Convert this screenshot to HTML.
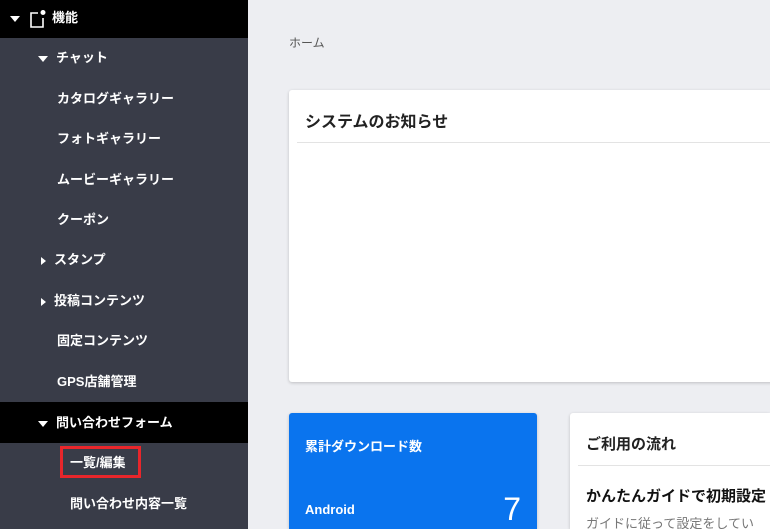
<!DOCTYPE html><html><head><meta charset="utf-8"><style>
*{margin:0;padding:0;box-sizing:border-box}
html,body{width:770px;height:529px;overflow:hidden}
body{background:#edeef2;font-family:"Liberation Sans","Noto Sans CJK JP",sans-serif;position:relative}
.sb{position:absolute;left:0;top:0;width:248px;height:529px;background:#393c48;color:#fff}
.it{position:absolute;left:0;width:248px;height:41px;line-height:41px;font-size:13px;font-weight:bold}
.blk{background:#000}
.tri{display:inline-block;width:0;height:0;border-left:5px solid transparent;border-right:5px solid transparent;border-top:6px solid #fff;margin-right:8px;vertical-align:middle}
.trr{display:inline-block;width:0;height:0;border-top:4px solid transparent;border-bottom:4px solid transparent;border-left:5px solid #fff;margin-right:8px;vertical-align:middle}
.card{position:absolute;background:#fff;border-radius:3px;box-shadow:0 1px 3px rgba(0,0,0,.2);overflow:hidden}
</style></head><body>
<div class="sb">
<div class="it blk" style="top:-3px;padding-left:10px"><span class="tri"></span><svg width="18" height="20" style="vertical-align:middle;margin-right:6px" viewBox="0 0 18 20"><path d="M10 4H3v14h12V9" fill="none" stroke="#fff" stroke-width="1.6"/><circle cx="15" cy="3.5" r="2.5" fill="#fff"/></svg>機能</div>
<div class="it" style="top:37px;padding-left:38px"><span class="tri"></span>チャット</div>
<div class="it" style="top:78px;padding-left:57px">カタログギャラリー</div>
<div class="it" style="top:118px;padding-left:57px">フォトギャラリー</div>
<div class="it" style="top:159px;padding-left:57px">ムービーギャラリー</div>
<div class="it" style="top:199px;padding-left:57px">クーポン</div>
<div class="it" style="top:239px;padding-left:41px"><span class="trr"></span>スタンプ</div>
<div class="it" style="top:280px;padding-left:41px"><span class="trr"></span>投稿コンテンツ</div>
<div class="it" style="top:320px;padding-left:57px">固定コンテンツ</div>
<div class="it" style="top:361px;padding-left:57px">GPS店舗管理</div>
<div class="it blk" style="top:402px;padding-left:38px"><span class="tri"></span>問い合わせフォーム</div>
<div style="position:absolute;left:60px;top:446px;width:81px;height:32px;border:3px solid #e8262b"></div>
<div class="it" style="top:442px;padding-left:70px">一覧/編集</div>
<div class="it" style="top:483px;padding-left:70px">問い合わせ内容一覧</div>
</div>
<div style="position:absolute;left:289px;top:34px;font-size:12px;color:#555">ホーム</div>
<div class="card" style="left:289px;top:90px;width:490px;height:292px">
<div style="position:absolute;left:16px;top:18px;font-size:16px;font-weight:bold;color:#222">システムのお知らせ</div>
<div style="position:absolute;left:8px;top:52px;right:0;height:1px;background:#e3e3e3"></div></div>
<div class="card" style="left:289px;top:413px;width:248px;height:116px;background:#0a74ee;border-radius:3px 3px 0 0">
<div style="position:absolute;left:16px;top:23px;font-size:13px;color:#fff;font-weight:bold">累計ダウンロード数</div>
<div style="position:absolute;left:16px;top:89px;font-size:13px;color:#fff;font-weight:bold">Android</div>
<div style="position:absolute;right:16px;top:78px;font-size:32px;color:#fff">7</div></div>
<div class="card" style="left:570px;top:413px;width:200px;height:116px;border-radius:3px 0 0 0">
<div style="position:absolute;left:16px;top:20px;font-size:15px;font-weight:bold;color:#222">ご利用の流れ</div>
<div style="position:absolute;left:8px;top:52px;width:300px;height:1px;background:#e3e3e3"></div>
<div style="position:absolute;left:16px;top:72px;font-size:15px;font-weight:bold;color:#111;white-space:nowrap">かんたんガイドで初期設定</div>
<div style="position:absolute;left:16px;top:100px;font-size:13px;color:#777;white-space:nowrap">ガイドに従って設定をしてい</div></div>
</body></html>
